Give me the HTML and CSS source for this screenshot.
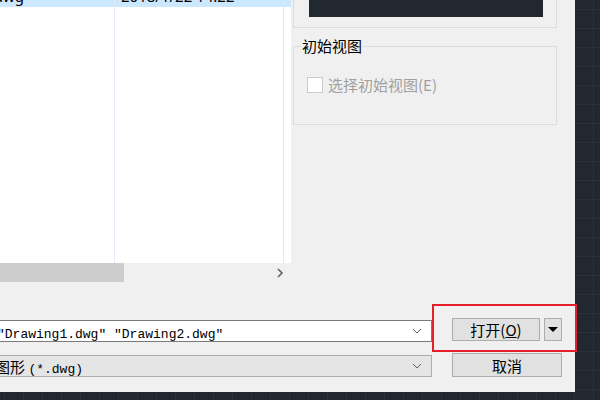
FILE: index.html
```
<!DOCTYPE html>
<html lang="zh-CN">
<head>
    <meta charset="UTF-8">
    <title>选择文件</title>
    <link rel="stylesheet" href="styles.css">
</head>
<body>
    <div class="screen">
        <div class="dialog">
            <div class="main">
                <div class="left-pane">
                    <div class="file-list">
                        <div class="row selected">
                            <div class="col-name">Drawing1.dwg</div>
                            <div class="col-date">2018/1/22 14:22</div>
                        </div>
                        <div class="list-body">
                            <div class="col-name"></div>
                            <div class="col-date"></div>
                        </div>
                    </div>
                    <div class="hscroll">
                        <div class="thumb"></div>
                        <svg class="arrow" width="8" height="10" viewBox="0 0 8 10">
                            <polyline points="2,1 6,5 2,9" fill="none" stroke="#606060" stroke-width="1.6"/>
                        </svg>
                    </div>
                </div>

                <div class="right-pane">
                    <div class="preview-box">
                        <div class="preview"></div>
                    </div>
                    <fieldset class="group">
                        <legend>初始视图</legend>
                        <label class="check disabled">
                            <span class="box"></span>
                            <span>选择初始视图(E)</span>
                        </label>
                    </fieldset>
                </div>
            </div>

            <div class="bottom">
                <div class="combos">
                    <div class="combo name-combo">
                        <span class="combo-text"><span class="en">″Drawing1.dwg″ ″Drawing2.dwg″</span></span>
                        <svg class="chev" width="10" height="6" viewBox="0 0 10 6">
                            <polyline points="1,1 5,5 9,1" fill="none" stroke="#606060" stroke-width="1"/>
                        </svg>
                    </div>
                    <div class="combo type-combo">
                        <span class="combo-text type-text">图形 <span class="en">(*.dwg)</span></span>
                        <svg class="chev" width="10" height="6" viewBox="0 0 10 6">
                            <polyline points="1,1 5,5 9,1" fill="none" stroke="#606060" stroke-width="1"/>
                        </svg>
                    </div>
                </div>
                <div class="buttons">
                    <div class="btn-row">
                        <button class="btn open-btn">打开(<u>O</u>)</button>
                        <button class="btn drop-btn">
                            <svg width="10" height="6" viewBox="0 0 10 6"><polygon points="0,0 10,0 5,5" fill="#000"/></svg>
                        </button>
                    </div>
                    <button class="btn cancel-btn">取消</button>
                </div>
            </div>
        </div>

        <!-- highlight around the open button -->
        <div class="highlight"></div>
    </div>
</body>
</html>
```

FILE: styles.css
```
body {
    margin: 0;
    padding: 0;
    background-color: #212830;
    background-image:
        linear-gradient(to right, #2a313a 1px, transparent 1px),
        linear-gradient(to bottom, #2a313a 1px, transparent 1px);
    background-size: 19px 19px;
    background-position: 4px 9px;
    font-family: "Noto Sans CJK SC", sans-serif;
    font-size: 15px;
    color: #000;
    overflow: hidden;
}
.screen {
    position: relative;
    width: 600px;
    height: 400px;
}
.dialog {
    width: 575px;
    height: 392px;
    background-color: #f0f0f0;
    overflow: hidden;
}
.main {
    display: flex;
    gap: 2px;
    height: 282px;
}
.left-pane {
    width: 291px;
    display: flex;
    flex-direction: column;
}
.file-list {
    height: 263px;
    background-color: #fff;
    display: flex;
    flex-direction: column;
    overflow: hidden;
}
.row {
    display: flex;
    height: 22px;
    margin-top: -15px;
    flex-shrink: 0;
    font-family: "Noto Sans", sans-serif;
    font-size: 15px;
    line-height: 18px;
}
.row.selected {
    background-color: #cce8ff;
}
.col-name {
    width: 115px;
    border-right: 1px solid #e3ecf6;
    box-sizing: border-box;
    white-space: nowrap;
    overflow: hidden;
}
.row .col-name {
    display: flex;
    align-items: flex-end;
    justify-content: flex-end;
    padding: 0 90px 2px 0;
}
.col-date {
    width: 169px;
    border-right: 1px solid #dbeaf8;
    padding-left: 6px;
    box-sizing: border-box;
    white-space: nowrap;
}
.row .col-date {
    display: flex;
    align-items: flex-end;
    padding-bottom: 2px;
}
.list-body {
    flex: 1;
    display: flex;
}
.hscroll {
    height: 19px;
    display: flex;
    align-items: center;
    justify-content: space-between;
}
.thumb {
    width: 124px;
    height: 19px;
    background-color: #cdcdcd;
}
.arrow {
    margin-right: 7px;
}
.right-pane {
    width: 264px;
    display: flex;
    flex-direction: column;
}
.preview-box {
    height: 28px;
    border: 1px solid #dcdcdc;
    border-top: none;
    box-sizing: border-box;
    padding: 0 13px 0 15px;
}
.preview {
    height: 17px;
    background-color: #212830;
}
.group {
    margin: 9px 0 0;
    height: 88px;
    box-sizing: border-box;
    border: 1px solid #dcdcdc;
    padding: 0 8px;
    min-width: 0;
}
.group legend {
    padding: 0 1px;
    margin-left: -1px;
    line-height: 18px;
}
.check {
    display: flex;
    align-items: center;
    gap: 5px;
    margin: 19px 0 0 5px;
    color: #a0a0a0;
}
.box {
    width: 14px;
    height: 14px;
    border: 1px solid #cccccc;
    background-color: #fff;
}
.bottom {
    display: flex;
    padding-top: 36px;
}
.combos {
    width: 433px;
    display: flex;
    flex-direction: column;
    gap: 13px;
    padding-top: 2px;
    margin-left: -1px;
}
.combo {
    height: 22px;
    box-sizing: border-box;
    display: flex;
    align-items: center;
    justify-content: space-between;
    padding-right: 9px;
    overflow: hidden;
    white-space: nowrap;
}
.name-combo {
    background-color: #fff;
    border: 1px solid #7a7a7a;
}
.type-combo {
    background-color: #e5e5e5;
    border: 1px solid #adadad;
}
.combo-text {
    margin-left: -3px;
}
.type-text {
    margin-left: -5px;
}
.en {
    font-family: "Liberation Mono", monospace;
    font-size: 13px;
}
.buttons {
    margin-left: 20px;
    display: flex;
    flex-direction: column;
    gap: 12px;
}
.btn-row {
    display: flex;
    gap: 4px;
}
.btn {
    height: 23px;
    background-color: #e1e1e1;
    border: 1px solid #adadad;
    font-family: "Noto Sans CJK SC", sans-serif;
    font-size: 15px;
    padding: 0;
    display: flex;
    align-items: center;
    justify-content: center;
    color: #000;
}
.open-btn {
    width: 88px;
}
.drop-btn {
    width: 18px;
}
.cancel-btn {
    width: 110px;
    height: 24px;
}
.highlight {
    position: absolute;
    left: 432px;
    top: 304px;
    width: 145px;
    height: 48px;
    box-sizing: border-box;
    border: 2px solid #e5202b;
}
```
